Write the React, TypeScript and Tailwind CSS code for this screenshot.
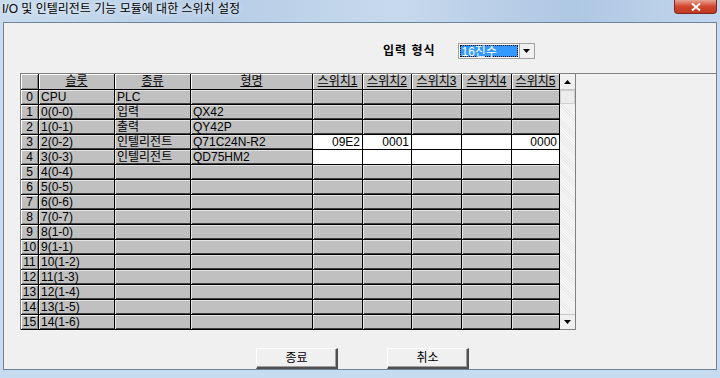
import React from "react";

const font = "font-['Liberation_Sans','Noto_Sans_CJK_KR',sans-serif]";

const rows: { slot: string; kind: string; model: string; sw?: string[] }[] = [
  { slot: "CPU", kind: "PLC", model: "" },
  { slot: "0(0-0)", kind: "입력", model: "QX42" },
  { slot: "1(0-1)", kind: "출력", model: "QY42P" },
  { slot: "2(0-2)", kind: "인텔리전트", model: "Q71C24N-R2", sw: ["09E2", "0001", "", "", "0000"] },
  { slot: "3(0-3)", kind: "인텔리전트", model: "QD75HM2", sw: ["", "", "", "", ""] },
  { slot: "4(0-4)", kind: "", model: "" },
  { slot: "5(0-5)", kind: "", model: "" },
  { slot: "6(0-6)", kind: "", model: "" },
  { slot: "7(0-7)", kind: "", model: "" },
  { slot: "8(1-0)", kind: "", model: "" },
  { slot: "9(1-1)", kind: "", model: "" },
  { slot: "10(1-2)", kind: "", model: "" },
  { slot: "11(1-3)", kind: "", model: "" },
  { slot: "12(1-4)", kind: "", model: "" },
  { slot: "13(1-5)", kind: "", model: "" },
  { slot: "14(1-6)", kind: "", model: "" },
];

const headers = ["슬롯", "종류", "형명", "스위치1", "스위치2", "스위치3", "스위치4", "스위치5"];

const cell =
  "h-[15px] border-r border-b border-black bg-[#c0c0c0] shadow-[inset_1px_1px_0_#e4e4e4,inset_0_-1px_0_#404040] px-[2px] text-[12px] leading-[14px] overflow-hidden whitespace-nowrap text-black";

function Grid() {
  return (
    <div className="flex border-t border-l border-[#808080]">
      <div className="grid grid-cols-[18px_76px_76px_122px_50px_49px_50px_50px_48px]">
        <div className="h-[16px] border-r border-b border-black bg-[#c0c0c0] shadow-[inset_1px_1px_0_#fff,inset_-1px_-1px_0_#808080]" />
        {headers.map((h) => (
          <div
            key={h}
            className="h-[16px] border-r border-b border-black bg-[#c0c0c0] shadow-[inset_1px_1px_0_#fff] text-center text-[12px] leading-[15px] underline underline-offset-1"
          >
            {h}
          </div>
        ))}
        {rows.map((r, i) => (
          <React.Fragment key={i}>
            <div className="h-[15px] border-r border-b border-black bg-[#c0c0c0] shadow-[inset_1px_1px_0_#fff,inset_-1px_-1px_0_#808080] text-center text-[12px] leading-[14px]">
              {i}
            </div>
            <div className={cell}>{r.slot}</div>
            <div className={cell}>{r.kind}</div>
            <div className={cell}>{r.model}</div>
            {[0, 1, 2, 3, 4].map((k) =>
              r.sw ? (
                <div
                  key={k}
                  className="h-[15px] border-r border-b border-black bg-white px-[2px] text-right text-[12px] leading-[14px]"
                >
                  {r.sw[k]}
                </div>
              ) : (
                <div key={k} className={cell} />
              )
            )}
          </React.Fragment>
        ))}
      </div>
      {/* scrollbar */}
      <div className="w-[16px] flex flex-col bg-[#f4f4f4] border-r border-b border-[#808080]">
        <div className="h-[16px] flex items-center justify-center bg-[#f0f0f0] border-b border-[#c8c8c8]">
          <svg width="7" height="4" viewBox="0 0 7 4">
            <path d="M3.5 0 L7 4 L0 4 Z" fill="#000" />
          </svg>
        </div>
        <div className="h-[14px] bg-[#ececec] border border-[#d0d0d0]" />
        <div className="flex-1 bg-[repeating-linear-gradient(45deg,#f7f7f7_0px,#f7f7f7_1px,#ebebeb_1px,#ebebeb_2px)]" />
        <div className="h-[15px] flex items-center justify-center bg-[#f0f0f0] border-t border-[#c8c8c8]">
          <svg width="7" height="4" viewBox="0 0 7 4">
            <path d="M0 0 L7 0 L3.5 4 Z" fill="#000" />
          </svg>
        </div>
      </div>
    </div>
  );
}

function Button({ label }: { label: string }) {
  return (
    <button className="w-[82px] h-[21px] bg-[#f0f0f0] border-t border-l border-white border-r-2 border-b-2 border-r-[#505050] border-b-[#505050] shadow-[inset_-1px_-1px_0_#a0a0a0] text-[12px] leading-[16px] text-black">
      {label}
    </button>
  );
}

export default function App() {
  return (
    <div className={`w-[720px] h-[378px] overflow-hidden flex flex-col bg-[#c6daf0] ${font}`}>
      {/* Title bar */}
      <div className="h-[22px] relative bg-[linear-gradient(90deg,#c9dbee_0%,#b6cde6_30%,#c7d9ed_55%,#aec7e3_80%,#c3d7ed_100%)]">
        <span className="absolute left-[2px] top-[2px] text-[12px] leading-[14px] text-black [text-shadow:0_0_6px_#ffffff]">
          I/O 및 인텔리전트 기능 모듈에 대한 스위치 설정
        </span>
        <div className="absolute right-[3px] top-0 w-[43px] h-[14px] rounded-b-[4px] border border-t-0 border-[#7a2a20] bg-[linear-gradient(180deg,#e8a493_0%,#d0462e_50%,#c13a22_100%)] flex items-center justify-center">
          <svg width="10" height="8" viewBox="0 0 10 8">
            <path d="M1 0.5 L9 7.5 M9 0.5 L1 7.5" stroke="#fff" strokeWidth="2" />
          </svg>
        </div>
      </div>
      {/* Client area */}
      <div className="mx-[3px] h-[348px] bg-[#f0f0f0] border border-[#6f8296] flex flex-col pl-[16px]">
        <div className="flex items-center mt-[20px] h-[16px]">
          <span className="ml-[363px] text-[12px] font-bold tracking-[1px] text-black">입력 형식</span>
          <div className="ml-[22px] w-[77px] h-[16px] flex border border-[#a0a0a0] bg-white">
            <div className="flex-1 m-[1px] bg-[#3399ff] text-white text-[12px] leading-[12px] px-[1px] border border-dotted border-black">
              16진수
            </div>
            <div className="w-[15px] flex items-center justify-center bg-[#f0f0f0] border-l border-[#a0a0a0]">
              <svg width="7" height="4" viewBox="0 0 7 4">
                <path d="M0 0 L7 0 L3.5 4 Z" fill="#000" />
              </svg>
            </div>
          </div>
        </div>
        <div className="mt-[14px]">
          <Grid />
        </div>
        <div className="flex mt-[18px] ml-[236px] gap-[49px]">
          <Button label="종료" />
          <Button label="취소" />
        </div>
      </div>
    </div>
  );
}
